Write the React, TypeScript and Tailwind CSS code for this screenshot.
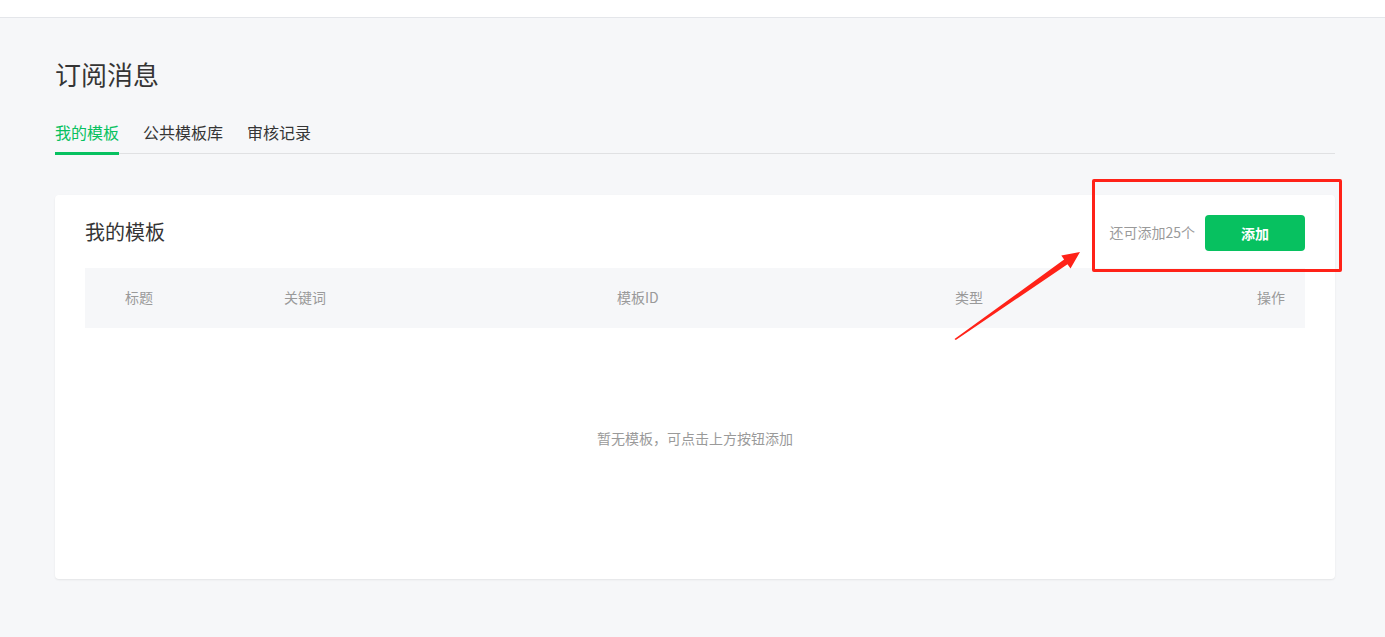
import React from "react";

const font = { fontFamily: '"Noto Sans CJK SC", "Liberation Sans", sans-serif' };

export default function App() {
  return (
    <div className="relative h-[637px] w-full overflow-hidden bg-[#f6f7f9]" style={font}>
      <div className="h-[18px] bg-white border-b border-[#e4e6ea]" />
      <div className="w-[1280px] ml-[55px] pt-[38px]">
        <h1 className="text-[26px] leading-[36px] text-[#353535] font-normal">订阅消息</h1>
        <div className="mt-[28px] flex gap-[24px] border-b border-[#e0e1e3] h-[34px]">
          <div className="text-[16px] leading-[24px] text-[#07c160] border-b-[3px] border-[#07c160] mb-[-1px] h-[35px]">我的模板</div>
          <div className="text-[16px] leading-[24px] text-[#353535]">公共模板库</div>
          <div className="text-[16px] leading-[24px] text-[#353535]">审核记录</div>
        </div>
        <div className="mt-[41px] bg-white rounded-[4px] shadow-[0_1px_2px_rgba(0,0,0,0.08)] px-[30px] pt-[20px] pb-[29px]">
          <div className="flex items-center justify-between h-[36px]">
            <div className="text-[20px] leading-[28px] text-[#353535] mb-[3px]">我的模板</div>
            <div className="flex items-center gap-[10px]">
              <span className="text-[14px] text-[#9a9a9a] mb-[2px]">还可添加25个</span>
              <button className="w-[100px] h-[36px] rounded-[4px] bg-[#07c160] text-white text-[14px] font-bold">添加</button>
            </div>
          </div>
          <div className="mt-[17px] h-[60px] bg-[#f6f7f9] flex items-center pl-[40px] pr-[20px] pb-[2px] text-[14px] text-[#9a9a9a]">
            <div className="w-[159px]">标题</div>
            <div className="w-[333px]">关键词</div>
            <div className="w-[338px]">模板ID</div>
            <div className="flex-1">类型</div>
            <div>操作</div>
          </div>
          <div className="h-[222px] flex items-center justify-center pb-[2px] text-[14px] text-[#9a9a9a]">
            暂无模板，可点击上方按钮添加
          </div>
        </div>
      </div>
      <div className="absolute left-[1092px] top-[179px] w-[250px] h-[93px] border-[3px] border-[#ff2218] rounded-[2px] pointer-events-none" />
      <svg className="absolute left-0 top-0 pointer-events-none" width="1385" height="637" viewBox="0 0 1385 637">
        <polygon
          points="954.5,339 955.8,340 1067.5,264.3 1070.5,268.5 1080,252 1061.3,255.6 1064.1,259.5"
          fill="#ff2218"
        />
      </svg>
    </div>
  );
}
